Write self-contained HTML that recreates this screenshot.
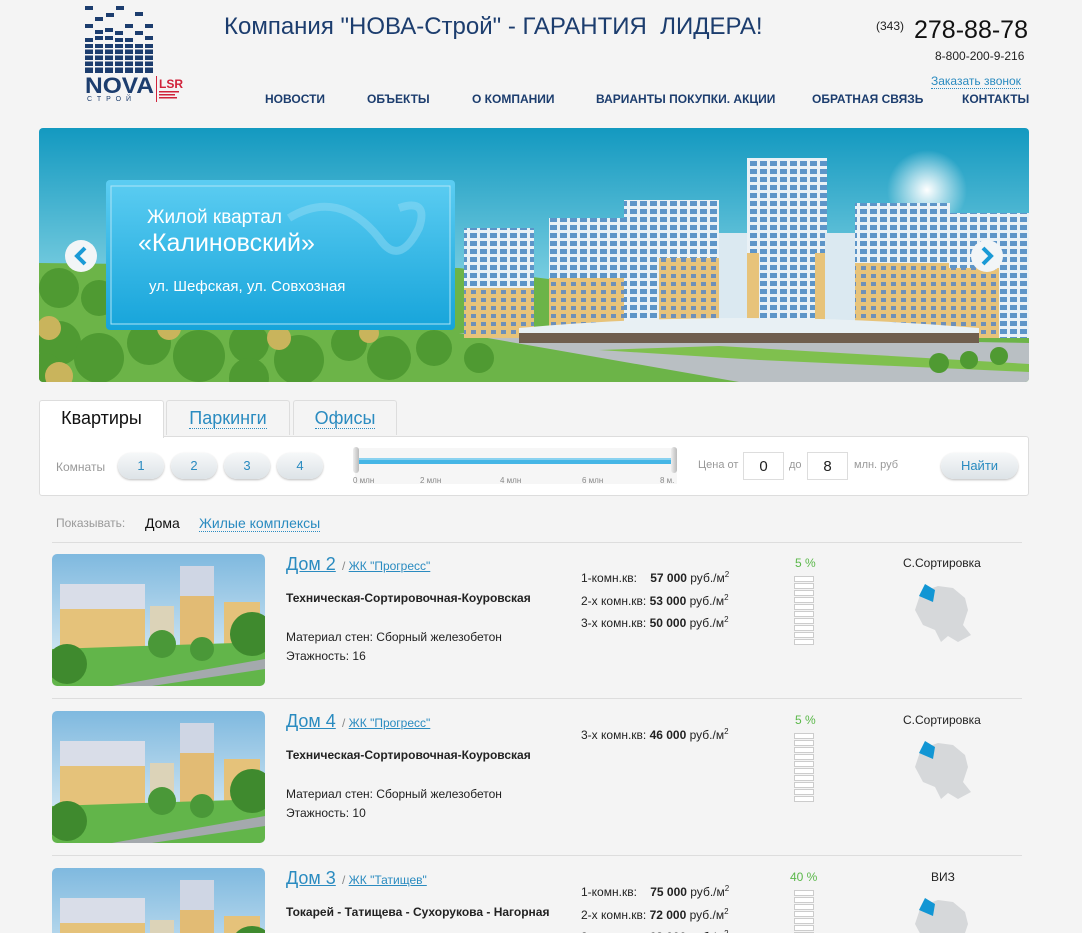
<!DOCTYPE html>
<html><head><meta charset="utf-8">
<style>
*{margin:0;padding:0;box-sizing:border-box}
html,body{width:1082px;height:933px;overflow:hidden}
body{background:#f4f4f4;font-family:"Liberation Sans",Arial,sans-serif;position:relative;color:#222}
.a{position:absolute;white-space:nowrap}
.nav{font-weight:bold;font-size:12px;color:#1c3d6e;top:92px}
.lnk{color:#2a8bc0;text-decoration:underline}
.dash{color:#2a8bc0;border-bottom:1px dotted #2a8bc0}
.tab{position:absolute;top:400px;height:37px;border:1px solid #ddd;border-bottom:none;background:#f4f4f4;font-size:18px;text-align:center;line-height:34px;border-radius:3px 3px 0 0}
.btn{position:absolute;top:453px;width:46px;height:26px;border-radius:13px;background:linear-gradient(#f6f8f9,#dde3e7);box-shadow:0 1px 2px #bbb;color:#2a8bc0;font-size:13px;text-align:center;line-height:26px}
.inp{position:absolute;top:452px;width:41px;height:28px;border:1px solid #ddd;background:#fff;font-size:15px;text-align:center;line-height:27px}
.sm{font-size:12px;color:#999}
.row{position:absolute;left:0;width:1082px;height:157px}
.thumb{position:absolute;left:52px;top:0;width:213px;height:132px;border-radius:5px;overflow:hidden}
.t{font-size:12px}
.bars{position:absolute;left:794px;width:20px}
.bars i{display:block;height:6px;border:1px solid #ccc;background:#fff;margin-bottom:1px}
</style></head><body>

<!-- logo -->
<svg class="a" style="left:85px;top:0" width="100" height="102" viewBox="0 0 100 102">
<g fill="#1c3d6e">
<rect x="0" y="6" width="8" height="4"/><rect x="31" y="6" width="8" height="4"/><rect x="21" y="13" width="8" height="4"/><rect x="10" y="17" width="8" height="4"/><rect x="50" y="12" width="8" height="4"/><rect x="0" y="24" width="8" height="4"/><rect x="40" y="24" width="8" height="4"/><rect x="60" y="24" width="8" height="4"/><rect x="10" y="30" width="8" height="4"/><rect x="20" y="28" width="8" height="4"/><rect x="30" y="31" width="8" height="4"/><rect x="50" y="31" width="8" height="4"/>
<rect x="0" y="38" width="8" height="4"/><rect x="10" y="36" width="8" height="4"/><rect x="20" y="36" width="8" height="4"/><rect x="30" y="38" width="8" height="4"/><rect x="40" y="38" width="8" height="4"/><rect x="60" y="36" width="8" height="4"/>
<rect x="0" y="44" width="68" height="29" />
</g>
<g fill="#f4f4f4"><rect x="0" y="48" width="68" height="1.5"/><rect x="0" y="54" width="68" height="1.5"/><rect x="0" y="60" width="68" height="1.5"/><rect x="0" y="66" width="68" height="1.5"/><rect x="8" y="44" width="2" height="29"/><rect x="18" y="44" width="2" height="29"/><rect x="28" y="44" width="2" height="29"/><rect x="38" y="44" width="2" height="29"/><rect x="48" y="44" width="2" height="29"/><rect x="58" y="44" width="2" height="29"/></g>
<text x="0" y="93" font-family="Liberation Sans" font-weight="bold" font-size="22" fill="#1c3d6e" textLength="69" lengthAdjust="spacingAndGlyphs">NOVA</text>
<text x="2" y="101" font-family="Liberation Sans" font-size="7" fill="#1c3d6e" letter-spacing="5">СТРОЙ</text>
<rect x="71" y="76" width="1" height="26" fill="#d0223a"/>
<text x="74" y="88" font-family="Liberation Sans" font-weight="bold" font-size="12" fill="#d0223a">LSR</text>
<rect x="74" y="91" width="20" height="1.5" fill="#d0223a"/><rect x="74" y="94" width="16" height="1.5" fill="#d0223a"/><rect x="74" y="97" width="18" height="1.5" fill="#d0223a"/>
</svg>

<div class="a" style="left:224px;top:13px;font-size:24px;color:#1c3d6e">Компания "НОВА-Строй" - ГАРАНТИЯ&nbsp; ЛИДЕРА!</div>
<div class="a" style="left:876px;top:19px;font-size:12px">(343)</div>
<div class="a" style="left:914px;top:16px;font-size:25px;color:#111">278-88-78</div>
<div class="a" style="left:935px;top:49px;font-size:12px">8-800-200-9-216</div>
<div class="a dash" style="left:931px;top:74px;font-size:12px">Заказать звонок</div>
<div class="a nav" style="left:265px">НОВОСТИ</div>
<div class="a nav" style="left:367px">ОБЪЕКТЫ</div>
<div class="a nav" style="left:472px">О КОМПАНИИ</div>
<div class="a nav" style="left:596px">ВАРИАНТЫ ПОКУПКИ. АКЦИИ</div>
<div class="a nav" style="left:812px">ОБРАТНАЯ СВЯЗЬ</div>
<div class="a nav" style="left:962px">КОНТАКТЫ</div>

<!-- banner -->
<svg class="a" style="left:39px;top:128px;border-radius:4px" width="990" height="254" viewBox="0 0 990 254">
<defs>
<linearGradient id="sky" x1="0" y1="0" x2="0" y2="1"><stop offset="0" stop-color="#1399c0"/><stop offset="0.6" stop-color="#79cde0"/><stop offset="1" stop-color="#c8ecf2"/></linearGradient>
<linearGradient id="box" x1="0" y1="0" x2="0" y2="1"><stop offset="0" stop-color="#5ccdf2"/><stop offset="1" stop-color="#16a4da"/></linearGradient>
<radialGradient id="sun"><stop offset="0" stop-color="#fff"/><stop offset="1" stop-color="#fff" stop-opacity="0"/></radialGradient>
<pattern id="win" width="10" height="8" patternUnits="userSpaceOnUse"><rect width="10" height="8" fill="#e9f1f6"/><rect x="1" y="1" width="7" height="5" fill="#5d95c8"/></pattern>
<pattern id="winy" width="10" height="8" patternUnits="userSpaceOnUse"><rect width="10" height="8" fill="#e7c37a"/><rect x="2" y="2" width="5" height="4" fill="#6e90b8"/></pattern>
</defs>
<rect width="990" height="254" fill="url(#sky)"/>
<circle cx="888" cy="62" r="40" fill="url(#sun)"/>
<path d="M0 135 L420 140 L990 210 L990 254 L0 254Z" fill="#6cb448"/>
<path d="M420 205 L990 215 L990 254 L700 254Z" fill="#b9bfc3"/>
<path d="M560 222 L680 218 L990 236 L990 244 L720 232Z" fill="#7fc04e"/>
<g>
<rect x="425" y="100" width="70" height="110" fill="url(#win)"/><rect x="425" y="160" width="70" height="50" fill="url(#winy)"/>
<rect x="510" y="90" width="80" height="120" fill="url(#win)"/><rect x="510" y="150" width="80" height="60" fill="url(#winy)"/>
<rect x="585" y="72" width="95" height="138" fill="url(#win)"/><rect x="620" y="130" width="60" height="80" fill="url(#winy)"/>
<rect x="680" y="105" width="30" height="95" fill="#dbe9f1"/>
<rect x="708" y="30" width="80" height="170" fill="url(#win)"/><rect x="708" y="125" width="12" height="75" fill="#e7c37a"/><rect x="776" y="125" width="12" height="75" fill="#e7c37a"/>
<rect x="786" y="105" width="30" height="95" fill="#dbe9f1"/>
<rect x="816" y="75" width="95" height="135" fill="url(#win)"/><rect x="816" y="135" width="95" height="75" fill="url(#winy)"/>
<rect x="910" y="85" width="80" height="125" fill="url(#win)"/><rect x="910" y="140" width="50" height="70" fill="url(#winy)"/>
<path d="M480 200 Q700 180 940 200 L940 215 L480 215Z" fill="#e8f0f4"/>
<rect x="480" y="205" width="460" height="10" fill="#6f5e4e"/>
</g>
<g fill="#4f9a32">
<circle cx="20" cy="215" r="22"/><circle cx="60" cy="230" r="25"/><circle cx="110" cy="215" r="22"/><circle cx="160" cy="228" r="26"/><circle cx="210" cy="215" r="20"/><circle cx="260" cy="232" r="25"/><circle cx="310" cy="215" r="18"/><circle cx="350" cy="230" r="22"/><circle cx="395" cy="220" r="18"/><circle cx="440" cy="230" r="15"/><circle cx="20" cy="160" r="20"/><circle cx="60" cy="170" r="18"/><circle cx="5" cy="245" r="20"/><circle cx="210" cy="250" r="20"/><circle cx="900" cy="235" r="10"/><circle cx="930" cy="232" r="9"/><circle cx="960" cy="228" r="9"/>
</g>
<g fill="#c9b45c"><circle cx="10" cy="200" r="12"/><circle cx="130" cy="200" r="12"/><circle cx="240" cy="210" r="12"/><circle cx="330" cy="205" r="10"/><circle cx="20" cy="248" r="14"/></g>
<rect x="67" y="52" width="349" height="150" rx="4" fill="url(#box)"/>
<rect x="72" y="58" width="339" height="138" fill="none" stroke="#aee4f6" stroke-width="1"/>
<path d="M250 90 Q300 60 340 110 Q360 140 380 100 Q390 70 360 80" fill="none" stroke="#8fdaf3" stroke-width="8" opacity="0.5"/>
<text x="108" y="95" font-family="Liberation Sans" font-size="19" fill="#fff">Жилой квартал</text>
<text x="99" y="123" font-family="Liberation Sans" font-size="25" fill="#fff">«Калиновский»</text>
<text x="110" y="163" font-family="Liberation Sans" font-size="15" fill="#fff">ул. Шефская, ул. Совхозная</text>
<circle cx="42" cy="128" r="16" fill="#f2f5f7"/><path d="M46 120 L38 128 L46 136" fill="none" stroke="#1a9ad6" stroke-width="4"/>
<circle cx="948" cy="128" r="16" fill="#f2f5f7"/><path d="M944 120 L952 128 L944 136" fill="none" stroke="#1a9ad6" stroke-width="4"/>
</svg>

<div class="a" style="left:39px;top:436px;width:990px;height:60px;background:#fff;border:1px solid #ddd;border-radius:3px"></div>
<div class="tab" style="left:39px;width:125px;background:#fff;height:38px;color:#111">Квартиры</div>
<div class="tab" style="left:166px;width:124px;height:35px"><span class="dash">Паркинги</span></div>
<div class="tab" style="left:293px;width:104px;height:35px"><span class="dash">Офисы</span></div>
<div class="a sm" style="left:56px;top:460px">Комнаты</div>
<div class="btn" style="left:118px">1</div><div class="btn" style="left:171px">2</div><div class="btn" style="left:224px">3</div><div class="btn" style="left:277px">4</div>
<div class="a" style="left:355px;top:448px;width:322px;height:36px;background:#f6f6f6"></div>
<div class="a" style="left:357px;top:458px;width:318px;height:6px;background:#45b6e6;border-top:2px solid #8ad2f0"></div>
<div class="a" style="left:353px;top:447px;width:6px;height:26px;border-radius:3px;background:linear-gradient(90deg,#eee,#bbb)"></div>
<div class="a" style="left:671px;top:447px;width:6px;height:26px;border-radius:3px;background:linear-gradient(90deg,#eee,#bbb)"></div>
<div class="a" style="left:353px;top:476px;font-size:8px;color:#888">0 млн</div>
<div class="a" style="left:420px;top:476px;font-size:8px;color:#888">2 млн</div>
<div class="a" style="left:500px;top:476px;font-size:8px;color:#888">4 млн</div>
<div class="a" style="left:582px;top:476px;font-size:8px;color:#888">6 млн</div>
<div class="a" style="left:660px;top:476px;font-size:8px;color:#888">8 м.</div>
<div class="a sm" style="left:698px;top:459px;font-size:11px">Цена от</div>
<div class="inp" style="left:743px">0</div>
<div class="a sm" style="left:789px;top:459px;font-size:11px">до</div>
<div class="inp" style="left:807px">8</div>
<div class="a sm" style="left:854px;top:459px;font-size:11px">млн. руб</div>
<div class="btn" style="left:941px;width:77px">Найти</div>

<div class="a sm" style="left:56px;top:516px;font-size:12px">Показывать:</div>
<div class="a" style="left:145px;top:515px;font-size:14px;color:#111">Дома</div>
<div class="a dash" style="left:199px;top:515px;font-size:14px">Жилые комплексы</div>
<div class="a" style="left:52px;top:542px;width:970px;height:1px;background:#ddd"></div>

<svg width="0" height="0" style="position:absolute"><defs>
<symbol id="th" viewBox="0 0 213 132">
<defs><linearGradient id="s2" x1="0" y1="0" x2="0" y2="1"><stop offset="0" stop-color="#7fb9df"/><stop offset="1" stop-color="#e6f2f8"/></linearGradient></defs>
<rect width="213" height="132" fill="url(#s2)"/>
<rect x="8" y="30" width="85" height="70" fill="#e5c27a"/><rect x="8" y="30" width="85" height="25" fill="#d9dde8"/>
<rect x="128" y="12" width="34" height="90" fill="#e2bb74"/><rect x="128" y="12" width="34" height="30" fill="#cfd6e4"/>
<rect x="98" y="52" width="24" height="40" fill="#dcd3b8"/>
<rect x="172" y="48" width="36" height="50" fill="#e5c27a"/>
<path d="M0 95 L213 88 L213 132 L0 132Z" fill="#62b54a"/>
<path d="M60 132 L213 105 L213 115 L100 132Z" fill="#a4a9ad"/>
<circle cx="15" cy="110" r="20" fill="#3f8a2e"/><circle cx="110" cy="90" r="14" fill="#4a9838"/><circle cx="150" cy="95" r="12" fill="#4a9838"/><circle cx="200" cy="80" r="22" fill="#3f8a2e"/>
</symbol>
<symbol id="map" viewBox="0 0 60 65">
<path d="M8 12 L25 6 L40 8 L52 18 L55 30 L50 45 L58 55 L45 62 L35 56 L28 62 L22 50 L10 45 L2 30 Z" fill="#d6d8da"/>
<path d="M12 4 L22 10 L20 22 L6 16Z" fill="#1296d4"/>
</symbol>
</defs></svg>

<div class="row" style="top:554px">
<svg class="thumb"><use href="#th"/></svg>
<div class="a lnk" style="left:286px;top:0;font-size:18px">Дом 2</div>
<div class="a" style="left:342px;top:5px;font-size:12px;color:#888">/ <span class="lnk">ЖК "Прогресс"</span></div>
<div class="a t" style="left:286px;top:37px;font-weight:bold">Техническая-Сортировочная-Коуровская</div>
<div class="a t" style="left:286px;top:76px">Материал стен: Сборный железобетон</div>
<div class="a t" style="left:286px;top:95px">Этажность: 16</div>
<div class="a t" style="left:581px;top:16px">1-комн.кв:&nbsp;&nbsp;&nbsp; <b>57 000</b> руб./м<sup style="font-size:8px">2</sup></div>
<div class="a t" style="left:581px;top:39px">2-х комн.кв: <b>53 000</b> руб./м<sup style="font-size:8px">2</sup></div>
<div class="a t" style="left:581px;top:61px">3-х комн.кв: <b>50 000</b> руб./м<sup style="font-size:8px">2</sup></div>
<div class="a t" style="left:795px;top:2px;color:#5bb84a">5 %</div>
<div class="bars" style="top:22px"><i></i><i></i><i></i><i></i><i></i><i></i><i></i><i></i><i></i><i></i></div>
<div class="a t" style="left:903px;top:2px">С.Сортировка</div>
<svg class="a" style="left:913px;top:26px" width="60" height="65"><use href="#map"/></svg>
</div>
<div class="a" style="left:52px;top:698px;width:970px;height:1px;background:#ddd"></div>

<div class="row" style="top:711px">
<svg class="thumb"><use href="#th"/></svg>
<div class="a lnk" style="left:286px;top:0;font-size:18px">Дом 4</div>
<div class="a" style="left:342px;top:5px;font-size:12px;color:#888">/ <span class="lnk">ЖК "Прогресс"</span></div>
<div class="a t" style="left:286px;top:37px;font-weight:bold">Техническая-Сортировочная-Коуровская</div>
<div class="a t" style="left:286px;top:76px">Материал стен: Сборный железобетон</div>
<div class="a t" style="left:286px;top:95px">Этажность: 10</div>
<div class="a t" style="left:581px;top:16px">3-х комн.кв: <b>46 000</b> руб./м<sup style="font-size:8px">2</sup></div>
<div class="a t" style="left:795px;top:2px;color:#5bb84a">5 %</div>
<div class="bars" style="top:22px"><i></i><i></i><i></i><i></i><i></i><i></i><i></i><i></i><i></i><i></i></div>
<div class="a t" style="left:903px;top:2px">С.Сортировка</div>
<svg class="a" style="left:913px;top:26px" width="60" height="65"><use href="#map"/></svg>
</div>
<div class="a" style="left:52px;top:855px;width:970px;height:1px;background:#ddd"></div>

<div class="row" style="top:868px">
<svg class="thumb"><use href="#th"/></svg>
<div class="a lnk" style="left:286px;top:0;font-size:18px">Дом 3</div>
<div class="a" style="left:342px;top:5px;font-size:12px;color:#888">/ <span class="lnk">ЖК "Татищев"</span></div>
<div class="a t" style="left:286px;top:37px;font-weight:bold">Токарей - Татищева - Сухорукова - Нагорная</div>
<div class="a t" style="left:581px;top:16px">1-комн.кв:&nbsp;&nbsp;&nbsp; <b>75 000</b> руб./м<sup style="font-size:8px">2</sup></div>
<div class="a t" style="left:581px;top:39px">2-х комн.кв: <b>72 000</b> руб./м<sup style="font-size:8px">2</sup></div>
<div class="a t" style="left:581px;top:61px">3-х комн.кв: <b>68 000</b> руб./м<sup style="font-size:8px">2</sup></div>
<div class="a t" style="left:790px;top:2px;color:#5bb84a">40 %</div>
<div class="bars" style="top:22px"><i></i><i></i><i></i><i></i><i></i><i></i><i></i><i></i><i style="background:#5bb84a"></i><i style="background:#5bb84a"></i></div>
<div class="a t" style="left:931px;top:2px">ВИЗ</div>
<svg class="a" style="left:913px;top:26px" width="60" height="65"><use href="#map"/></svg>
</div>
</body></html>
